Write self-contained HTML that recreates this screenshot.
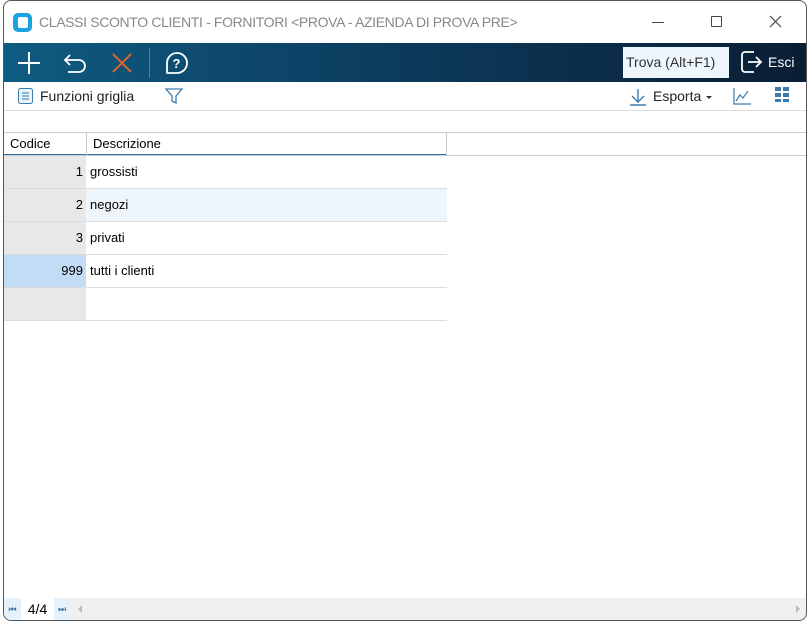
<!DOCTYPE html><html><head><style>
*{margin:0;padding:0;box-sizing:border-box}
body{width:810px;height:623px;background:#fff;font-family:"Liberation Sans",sans-serif;position:relative;overflow:hidden}
.win{position:absolute;left:3px;top:0;width:804px;height:621px;border:1px solid #555;border-radius:8px;overflow:hidden;background:#fff}
.abs{position:absolute}
.tb{left:0;top:42px;width:802px;height:39px;background:linear-gradient(90deg,#0f5c82 0%,#0c3a5c 50%,#0a1e34 100%)}
.t{font-size:14px;color:#222}
.row{position:absolute;left:0;width:443px;height:33px;border-bottom:1px solid #dcdcdc}
.c1{position:absolute;left:0;top:0;width:82px;height:32px;background:#e8e8e8;text-align:right;padding-right:3px;line-height:32px;font-size:13px}
.c2{position:absolute;left:82px;top:0;width:361px;height:32px;line-height:32px;padding-left:4px;font-size:13px}
</style></head><body><div class="win">
<div class="abs" style="left:9px;top:12px;width:19px;height:19px;background:#1aa3e0;border-radius:5px"><div style="position:absolute;left:5px;top:4px;width:10px;height:11px;background:#fff;border-radius:2px"></div></div>
<div class="abs" style="left:35px;top:13px;font-size:14px;color:#888;letter-spacing:-0.35px">CLASSI SCONTO CLIENTI - FORNITORI &lt;PROVA - AZIENDA DI PROVA PRE&gt;</div>
<div class="abs" style="left:648px;top:21px;width:12px;height:1px;background:#444"></div>
<div class="abs" style="left:707px;top:15px;width:11px;height:11px;border:1px solid #444;border-radius:1px"></div>
<svg class="abs" style="left:765px;top:14px" width="13" height="13"><path d="M1 1L12 12M12 1L1 12" stroke="#444" stroke-width="1.2"/></svg>
<div class="abs tb">
<svg class="abs" style="left:12px;top:7px" width="26" height="26"><path d="M13 2V24M2 13H24" stroke="#fff" stroke-width="2"/></svg>
<svg class="abs" style="left:58px;top:8px" width="28" height="24"><path d="M8 4L3 9L8 14M3 9H17a6 6 0 0 1 0 12H6" stroke="#fff" stroke-width="1.8" fill="none"/></svg>
<svg class="abs" style="left:106px;top:8px" width="24" height="24"><path d="M3 3L21 21M21 3L3 21" stroke="#e0622c" stroke-width="2"/></svg>
<div class="abs" style="left:145px;top:5px;width:1px;height:30px;background:#4c7a98"></div>
<svg class="abs" style="left:160px;top:7px" width="26" height="26"><path d="M3 23V13a10 10 0 1 1 10 10Z" stroke="#fff" stroke-width="1.8" fill="none" stroke-linejoin="round"/><text x="8.5" y="18" fill="#fff" font-size="13" font-weight="bold" font-family="Liberation Sans">?</text></svg>
<div class="abs" style="left:619px;top:4px;width:106px;height:31px;background:#eef6fd;font-size:14px;color:#333;line-height:31px;padding-left:3px">Trova (Alt+F1)</div>
<svg class="abs" style="left:736px;top:7px" width="24" height="24"><path d="M14 2H5a3 3 0 0 0 -3 3V19a3 3 0 0 0 3 3H14M8 12H21M16 7L21 12L16 17" stroke="#fff" stroke-width="1.8" fill="none"/></svg>
<div class="abs" style="left:764px;top:11px;color:#fff;font-size:14px">Esci</div>
</div>
<svg class="abs" style="left:13px;top:86px" width="18" height="18"><rect x="1.5" y="1.5" width="14" height="15" rx="2" fill="#eaf3fa" stroke="#3a7cb0"/><path d="M5 6H12M5 9H12M5 12H12" stroke="#3a7cb0"/></svg>
<div class="abs t" style="left:36px;top:87px">Funzioni griglia</div>
<svg class="abs" style="left:160px;top:85px" width="20" height="20"><path d="M2 3H18L12 10V17L8 15V10Z" fill="none" stroke="#3a7cb0" stroke-width="1.3"/></svg>
<svg class="abs" style="left:624px;top:86px" width="20" height="20"><path d="M10 2V15M4 9L10 15L16 9M2 18H18" stroke="#3a7cb0" stroke-width="1.4" fill="none"/></svg>
<div class="abs t" style="left:649px;top:87px">Esporta</div>
<div class="abs" style="left:702px;top:95px;border:3px solid transparent;border-top:3px solid #333"></div>
<svg class="abs" style="left:728px;top:85px" width="20" height="20"><path d="M2 2V18H19M4 15L8 9L11 12L16 5" stroke="#3a7cb0" stroke-width="1.2" fill="none"/></svg>
<svg class="abs" style="left:771px;top:86px" width="16" height="16" fill="#3a7cb0"><rect x="0" y="0" width="6" height="4"/><rect x="8" y="0" width="6" height="4"/><rect x="0" y="6" width="6" height="4"/><rect x="8" y="6" width="6" height="4"/><rect x="0" y="12" width="6" height="3"/><rect x="8" y="12" width="6" height="3"/></svg>
<div class="abs" style="left:0;top:109px;width:802px;height:1px;background:#ddd"></div>
<div class="abs" style="left:0;top:131px;width:802px;height:1px;background:#ccc"></div>
<div class="abs" style="left:0;top:132px;width:443px;height:23px;border-bottom:2px solid #2f6ea0"></div>
<div class="abs" style="left:82px;top:132px;width:1px;height:22px;background:#ccc"></div>
<div class="abs" style="left:442px;top:132px;width:1px;height:23px;background:#ccc"></div>
<div class="abs" style="left:0;top:154px;width:802px;height:1px;background:#ccc"></div>
<div class="abs" style="left:6px;top:135px;font-size:13px">Codice</div>
<div class="abs" style="left:89px;top:135px;font-size:13px">Descrizione</div>
<div class="row" style="top:155px"><div class="c1">1</div><div class="c2">grossisti</div></div>
<div class="row" style="top:188px"><div class="c1">2</div><div class="c2" style="background:#eef6fc">negozi</div></div>
<div class="row" style="top:221px"><div class="c1">3</div><div class="c2">privati</div></div>
<div class="row" style="top:254px"><div class="c1" style="background:#c3dcf5">999</div><div class="c2">tutti i clienti</div></div>
<div class="row" style="top:287px"><div class="c1"></div><div class="c2"></div></div>
<div class="abs" style="left:0;top:597px;width:802px;height:22px;background:#f0f0f0"></div>
<div class="abs" style="left:0;top:597px;width:17px;height:22px;background:#e6f2fb;font-size:9px;color:#3a6da0;line-height:22px;text-align:center">⏮</div>
<div class="abs" style="left:17px;top:597px;width:33px;height:22px;background:#fff;font-size:14px;line-height:22px;text-align:center">4/4</div>
<div class="abs" style="left:50px;top:597px;width:16px;height:22px;background:#e6f2fb;font-size:9px;color:#3a6da0;line-height:22px;text-align:center">⏭</div>
<div class="abs" style="left:74px;top:604px;border:4px solid transparent;border-right:4px solid #bbb;border-left:0"></div>
<div class="abs" style="left:792px;top:604px;border:4px solid transparent;border-left:4px solid #bbb;border-right:0"></div>
</div></body></html>
